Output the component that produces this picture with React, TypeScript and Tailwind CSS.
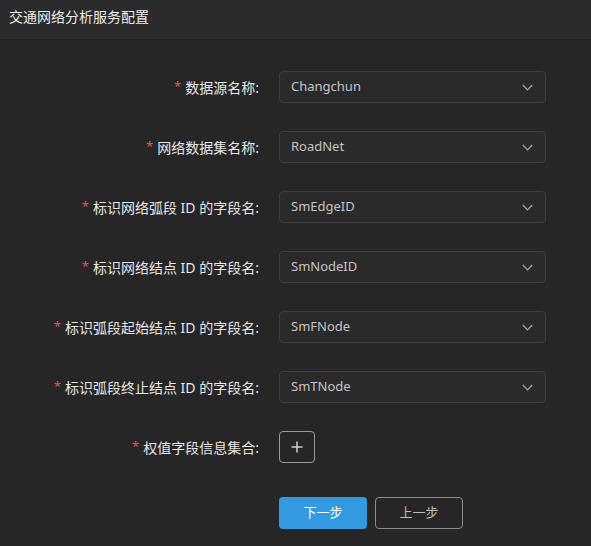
import React from "react";

const rows = [
  { label: "数据源名称", value: "Changchun" },
  { label: "网络数据集名称", value: "RoadNet" },
  { label: "标识网络弧段 ID 的字段名", value: "SmEdgeID" },
  { label: "标识网络结点 ID 的字段名", value: "SmNodeID" },
  { label: "标识弧段起始结点 ID 的字段名", value: "SmFNode" },
  { label: "标识弧段终止结点 ID 的字段名", value: "SmTNode" },
];

function Label({ text }: { text: string }) {
  return (
    <div className="flex h-8 items-center justify-end pr-[20px] text-[14px] text-[#e6e6e6]">
      <span className="mr-[4px] text-[13px] text-[#e8553e]">*</span>
      <span>{text}:</span>
    </div>
  );
}

function Chevron() {
  return (
    <svg width="11" height="7" viewBox="0 0 11 7" fill="none" className="text-[#a8a8a8]">
      <path d="M0.8 1L5.5 5.8L10.2 1" stroke="currentColor" strokeWidth="1.2" />
    </svg>
  );
}

export default function App() {
  return (
    <div
      className="h-[546px] w-[591px] bg-[#262626]"
      style={{ fontFamily: '"Noto Sans", "Noto Sans CJK SC", sans-serif' }}
    >
      <div className="h-10 border-b border-[#212121] bg-[#2b2b2b] pl-[9px] pt-[7px] text-[14px] leading-5 text-[#ececec]">
        交通网络分析服务配置
      </div>
      <div className="grid grid-cols-[279px_267px] gap-y-7 pt-[31px]">
        {rows.map((r) => (
          <React.Fragment key={r.label}>
            <Label text={r.label} />
            <div className="flex h-8 items-center justify-between rounded border border-[#3d3d3d] bg-[#2a2a2a] pl-[11px] pr-[12px] text-[13px] text-[#c4c4c4]">
              <span>{r.value}</span>
              <Chevron />
            </div>
          </React.Fragment>
        ))}
        <Label text="权值字段信息集合" />
        <div>
          <div className="flex h-8 w-9 items-center justify-center rounded border border-[#9a9a9a] text-[#d0d0d0]">
            <svg width="12" height="12" viewBox="0 0 12 12">
              <path d="M6 0.5V11.5M0.5 6H11.5" stroke="currentColor" strokeWidth="1.5" />
            </svg>
          </div>
        </div>
        <div className="mt-[6px]" />
        <div className="mt-[6px] flex gap-[8px]">
          <button className="h-8 w-[88px] rounded bg-[#3399e0] text-[13px] text-white">下一步</button>
          <button className="h-8 w-[88px] rounded border border-[#8c8c8c] text-[13px] text-[#bdbdbd]">上一步</button>
        </div>
      </div>
    </div>
  );
}
